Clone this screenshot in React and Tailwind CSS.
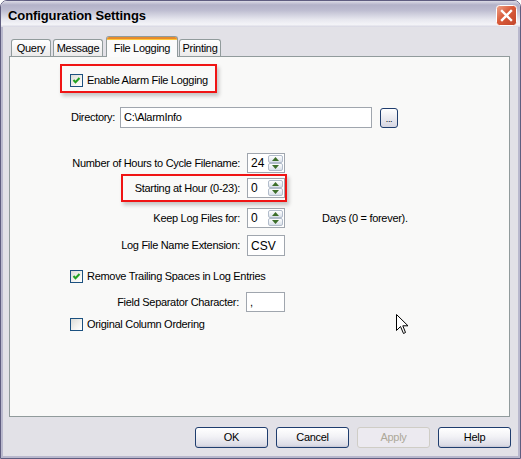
import React from "react";

function Check({ checked }) {
  return (
    <div className="relative h-[13px] w-[13px] shrink-0 border border-[#1c5180] bg-[linear-gradient(135deg,#dcdcd7_0%,#f4f4f0_60%,#ffffff_100%)]">
      {checked && (
        <svg className="absolute left-[1px] top-[1px]" width="9" height="9" viewBox="0 0 9 9">
          <polyline points="1.5,4 3.5,6.3 7.5,2" fill="none" stroke="#21a121" strokeWidth="2" />
        </svg>
      )}
    </div>
  );
}

function SpinBtn({ up }) {
  return (
    <div className="flex h-[8px] w-[15px] items-center justify-center rounded-[2px] border border-[#b2bccb] bg-[linear-gradient(to_bottom,#ffffff,#d9e0e9)]">
      <svg width="7" height="4" viewBox="0 0 7 4">
        {up ? (
          <polygon points="0,4 3.5,0 7,4" fill="#3d6e2a" />
        ) : (
          <polygon points="0,0 3.5,4 7,0" fill="#3d6e2a" />
        )}
      </svg>
    </div>
  );
}

function Spin({ value }) {
  return (
    <div className="flex h-[20px] w-[38px] shrink-0 border border-[#a0a6ae] bg-white">
      <div className="flex-1 pl-[3px] text-[12px] leading-[18px] tracking-normal text-black">{value}</div>
      <div className="flex flex-col pr-[1px] pt-[1px]">
        <SpinBtn up />
        <SpinBtn />
      </div>
    </div>
  );
}

function Btn({ children, disabled }) {
  return (
    <div
      className={
        disabled
          ? "flex h-[21px] w-[73px] items-center justify-center rounded-[3px] border border-[#cfcdc6] bg-[#eceaf0] text-[#aca899]"
          : "flex h-[21px] w-[73px] items-center justify-center rounded-[3px] border border-[#1f3d6e] bg-[linear-gradient(to_bottom,#ffffff_0%,#f2f2f6_45%,#dcdce6_90%,#c6c6d4_100%)] text-black"
      }
    >
      {children}
    </div>
  );
}

export default function App() {
  return (
    <div className="h-[459px] w-[521px] bg-white font-['Liberation_Sans',Arial,sans-serif] text-[11px] tracking-[-0.3px] text-black">
      <div className="flex h-[459px] w-[521px] flex-col overflow-hidden rounded-t-[7px] border border-[#5f5d80]">
        {/* Title bar */}
        <div className="flex h-[26px] shrink-0 items-center justify-between bg-[linear-gradient(to_bottom,#dcdbe6_0%,#b3b2c8_15%,#bdbcd0_35%,#e6e6ee_70%,#f4f4f8_90%,#d6d5e1_100%)] pl-[7px] pr-[3px] pt-[4px]">
          <span className="text-[13px] font-bold tracking-[-0.1px] text-black">Configuration Settings</span>
          <svg width="21" height="21" viewBox="0 0 21 21" className="mb-[2px]">
            <defs>
              <linearGradient id="cg" x1="0" y1="0" x2="1" y2="1">
                <stop offset="0" stopColor="#f0a58a" />
                <stop offset="0.45" stopColor="#d95b3a" />
                <stop offset="1" stopColor="#c2452a" />
              </linearGradient>
            </defs>
            <rect x="0.5" y="0.5" width="20" height="20" rx="3" fill="url(#cg)" stroke="#ffffff" />
            <path d="M6 6 L15 15 M15 6 L6 15" stroke="#ffffff" strokeWidth="2.4" strokeLinecap="square" />
          </svg>
        </div>

        {/* Body */}
        <div className="flex flex-1 flex-col border-x-2 border-b-2 border-[#b9b8cd] bg-[#e2e1e7]">
          {/* Tabs */}
          <div className="mt-[9px] flex h-[20px] items-end">
            <div className="ml-[8px] flex h-[17px] w-[40px] items-center justify-center rounded-t-[3px] border border-b-0 border-[#919b9c] bg-[linear-gradient(to_bottom,#ffffff,#ebeaea)]">
              Query
            </div>
            <div className="ml-[2px] flex h-[17px] w-[50px] items-center justify-center rounded-t-[3px] border border-b-0 border-[#919b9c] bg-[linear-gradient(to_bottom,#ffffff,#ebeaea)]">
              Message
            </div>
            <div className="relative z-10 -mb-px ml-[3px] flex h-[21px] w-[72px] flex-col rounded-t-[3px] border border-b-0 border-[#919b9c] bg-[#fbfbfb]">
              <div className="h-[2px] rounded-t-[2px] bg-[#e68b2c]" />
              <div className="h-[1px] bg-[#ffc73c]" />
              <div className="flex flex-1 items-center justify-center pb-[1px]">File Logging</div>
            </div>
            <div className="ml-[1px] flex h-[17px] w-[42px] items-center justify-center rounded-t-[3px] border border-b-0 border-[#919b9c] bg-[linear-gradient(to_bottom,#ffffff,#ebeaea)]">
              Printing
            </div>
          </div>

          {/* Panel */}
          <div className="relative ml-[6px] flex h-[361px] w-[501px] flex-col border border-[#919b9c] bg-[#f9f9f8] pt-[7px]">
            {/* Enable */}
            <div className="ml-[50px] flex h-[29px] w-[157px] items-start border-2 border-[#f01414] pl-[8px] pt-[8px] shadow-[2px_3px_4px_rgba(0,0,0,0.22)]">
              <div className="flex h-[13px] items-center gap-[4px]">
                <Check checked />
                <span className="whitespace-nowrap">Enable Alarm File Logging</span>
              </div>
            </div>

            {/* Directory */}
            <div className="ml-[61px] mt-[14px] flex items-center">
              <span className="w-[49px] whitespace-nowrap">Directory:</span>
              <div className="flex h-[21px] w-[252px] items-center border border-[#a0a6ae] bg-white pl-[3px]">C:\AlarmInfo</div>
              <div className="ml-[8px] flex h-[20px] w-[18px] items-end justify-center rounded-[3px] border border-[#1f3d6e] bg-[linear-gradient(to_bottom,#ffffff,#d6d6e2)] pb-[3px] text-[9px] leading-[9px]">
                ...
              </div>
            </div>

            {/* Hours */}
            <div className="mt-[25px] flex items-center">
              <span className="w-[230px] whitespace-nowrap text-right">Number of Hours to Cycle Filename:</span>
              <div className="ml-[7px]">
                <Spin value="24" />
              </div>
            </div>

            {/* Starting */}
            <div className="relative mt-[5px] flex items-center">
              <span className="w-[230px] whitespace-nowrap text-right">Starting at Hour (0-23):</span>
              <div className="ml-[7px]">
                <Spin value="0" />
              </div>
              <div className="pointer-events-none absolute left-[111px] top-[-4px] h-[28px] w-[166px] border-2 border-[#f01414] shadow-[2px_3px_4px_rgba(0,0,0,0.22)]" />
            </div>

            {/* Keep */}
            <div className="mt-[10px] flex items-center">
              <span className="w-[230px] whitespace-nowrap text-right">Keep Log Files for:</span>
              <div className="ml-[7px]">
                <Spin value="0" />
              </div>
              <span className="ml-[37px] whitespace-nowrap">Days (0 = forever).</span>
            </div>

            {/* Extension */}
            <div className="mt-[7px] flex items-center">
              <span className="w-[230px] whitespace-nowrap text-right">Log File Name Extension:</span>
              <div className="ml-[7px] flex h-[21px] w-[38px] items-center border border-[#a0a6ae] bg-white pl-[3px] text-[12px] tracking-normal">CSV</div>
            </div>

            {/* Remove trailing */}
            <div className="ml-[60px] mt-[14px] flex h-[13px] items-center gap-[4px]">
              <Check checked />
              <span className="whitespace-nowrap">Remove Trailing Spaces in Log Entries</span>
            </div>

            {/* Field separator */}
            <div className="mt-[9px] flex items-center">
              <span className="w-[229px] whitespace-nowrap text-right">Field Separator Character:</span>
              <div className="ml-[7px] flex h-[20px] w-[39px] items-center border border-[#a0a6ae] bg-white pl-[3px]">,</div>
            </div>

            {/* Original */}
            <div className="ml-[60px] mt-[6px] flex h-[13px] items-center gap-[4px]">
              <Check />
              <span className="whitespace-nowrap">Original Column Ordering</span>
            </div>

            {/* Cursor */}
            <svg className="absolute left-[386px] top-[257px]" width="13" height="21" viewBox="0 0 13 21">
              <path
                d="M0.5 0.5 L0.5 16.5 L4.5 12.5 L7.5 19.5 L9.5 18.5 L6.8 11.8 L12 11.8 Z"
                fill="#ffffff"
                stroke="#000000"
                strokeWidth="1"
              />
            </svg>
          </div>

          {/* Buttons */}
          <div className="mr-[7px] mt-[10px] flex justify-end gap-[8px]">
            <Btn>OK</Btn>
            <Btn>Cancel</Btn>
            <Btn disabled>Apply</Btn>
            <Btn>Help</Btn>
          </div>
        </div>
      </div>
    </div>
  );
}
